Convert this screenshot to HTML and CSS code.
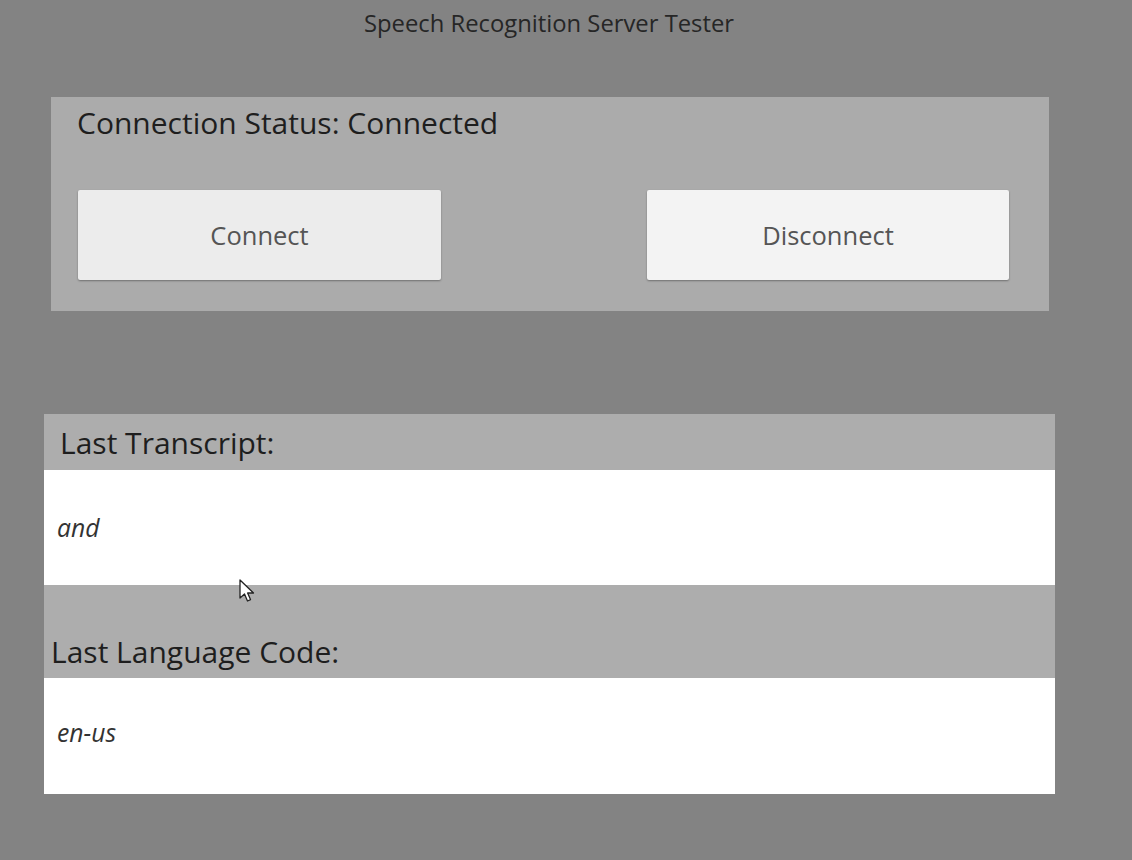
FILE: index.html
```html
<!DOCTYPE html>
<html>
<head>
<meta charset="utf-8">
<link rel="stylesheet" href="styles.css">
</head>
<body>
<div class="page">
  <h1 class="title">Speech Recognition Server Tester</h1>
  <section class="conn">
    <div class="status">Connection Status: Connected</div>
    <div class="buttons">
      <button class="btn btn-connect">Connect</button>
      <button class="btn btn-disconnect">Disconnect</button>
    </div>
  </section>
  <section class="results">
    <div class="head head-transcript">Last Transcript:</div>
    <div class="value value-transcript">and</div>
    <div class="head head-lang">Last Language Code:</div>
    <div class="value value-lang">en-us</div>
    <svg class="cursor" width="18" height="26" viewBox="0 0 18 26">
      <path d="M1 1 L1 19 L5.5 15 L8.5 22 L11.5 20.6 L8.6 14 L14.5 14 Z" fill="#fff" stroke="#222" stroke-width="1.3" stroke-linejoin="round"/>
    </svg>
  </section>
</div>
</body>
</html>
```
FILE: styles.css
```css
html, body {
  margin: 0;
  padding: 0;
  background: #838383;
}
body {
  font-family: "Open Sans", "Noto Sans", sans-serif;
  color: #222;
  width: 1132px;
  height: 860px;
  overflow: hidden;
}
.page {
  display: flex;
  flex-direction: column;
}
.title {
  margin: 6px 0 0 0;
  height: 36px;
  line-height: 34px;
  text-align: center;
  font-size: 23.8px;
  font-weight: 400;
  color: #262626;
  padding-right: 34px;
}
.conn {
  margin: 55px 0 0 51px;
  width: 998px;
  height: 214px;
  box-sizing: border-box;
  background: #ababab;
  padding: 0 40px 0 26px;
}
.status {
  font-size: 30px;
  line-height: 36px;
  padding-top: 8px;
  color: #1e1e1e;
}
.buttons {
  margin-top: 49px;
  display: flex;
  justify-content: space-between;
  padding-left: 1px;
}
.btn {
  width: 363px;
  height: 90px;
  border: none;
  border-radius: 2px;
  font-family: "Open Sans", "Noto Sans", sans-serif;
  font-size: 25.5px;
  color: #555;
  box-shadow: 0 1px 2px rgba(0,0,0,0.35);
  padding: 0;
}
.btn-connect { background: #ececec; }
.btn-disconnect { background: #f3f3f3; width: 362px; }
.results {
  position: relative;
  margin: 103px 0 0 44px;
  width: 1011px;
  display: flex;
  flex-direction: column;
}
.head {
  background: #adadad;
  font-size: 30px;
  color: #1e1e1e;
}
.head-transcript {
  height: 56px;
  line-height: 58px;
  padding-left: 16px;
}
.head-lang {
  height: 93px;
  box-sizing: border-box;
  padding: 43px 0 0 7px;
  line-height: 48px;
}
.value {
  background: #fff;
  font-style: italic;
  font-size: 24.7px;
  line-height: 34px;
  color: #333;
  padding-left: 13px;
  box-sizing: border-box;
}
.value-transcript {
  height: 115px;
  padding-top: 41px;
}
.value-lang {
  height: 116px;
  padding-top: 38px;
}
.cursor {
  position: absolute;
  left: 195px;
  top: 165px;
}
```
